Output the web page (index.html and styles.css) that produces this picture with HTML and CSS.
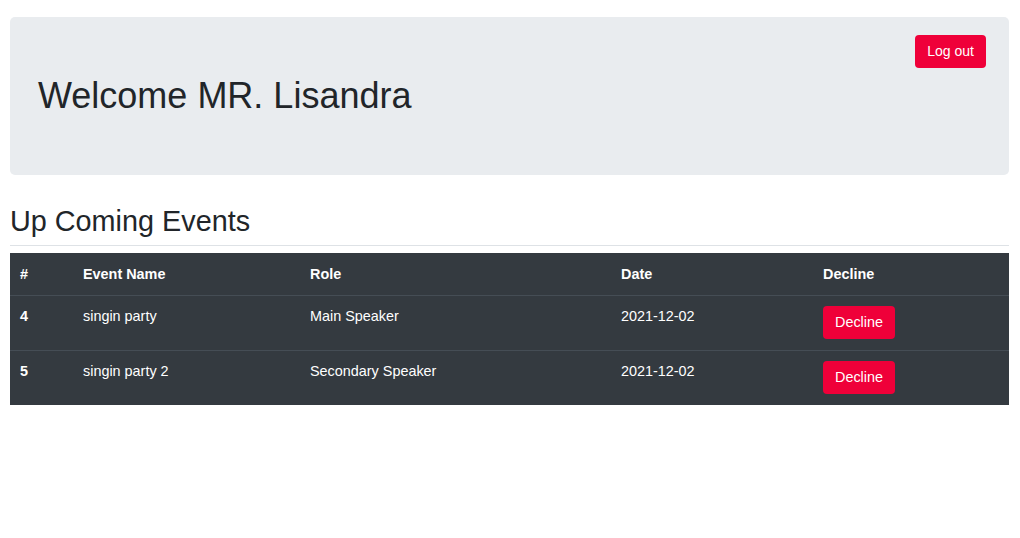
FILE: index.html
```html
<!DOCTYPE html>
<html lang="en">
<head>
<meta charset="utf-8">
<title>Welcome</title>
<link rel="stylesheet" href="styles.css">
</head>
<body>
<div class="page">
  <header class="jumbotron">
    <h1 class="welcome">Welcome MR. Lisandra</h1>
    <button class="btn btn-danger">Log out</button>
  </header>
  <h2 class="section-title">Up Coming Events</h2>
  <table class="events">
    <colgroup>
      <col class="c-num"><col class="c-name"><col class="c-role"><col class="c-date"><col class="c-decline">
    </colgroup>
    <thead>
      <tr><th>#</th><th>Event Name</th><th>Role</th><th>Date</th><th>Decline</th></tr>
    </thead>
    <tbody>
      <tr><th>4</th><td>singin party</td><td>Main Speaker</td><td>2021-12-02</td><td><button class="btn btn-danger btn-row">Decline</button></td></tr>
      <tr><th>5</th><td>singin party 2</td><td>Secondary Speaker</td><td>2021-12-02</td><td><button class="btn btn-danger btn-row">Decline</button></td></tr>
    </tbody>
  </table>
</div>
</body>
</html>
```

FILE: styles.css
```css
* { box-sizing: border-box; }
body {
  margin: 0;
  font-family: "Liberation Sans", Arial, sans-serif;
  color: #212529;
  background: #fff;
}
.page {
  padding: 17px 11px 0 10px;
}
.jumbotron {
  height: 158px;
  background: #e9ecef;
  border-radius: 5px;
  display: flex;
  justify-content: space-between;
  align-items: flex-start;
  padding: 18px 23px 0 28px;
}
.welcome {
  margin: 39px 0 0 0;
  font-size: 36px;
  font-weight: 400;
  line-height: 1.2;
}
.btn {
  font-family: inherit;
  font-size: 14px;
  line-height: 21px;
  padding: 6px 12px;
  border: 0;
  border-radius: 4px;
  cursor: pointer;
}
.btn-row {
  font-size: 14.4px;
}
.btn-danger {
  background: #ef0039;
  color: #fff;
}
.section-title {
  margin: 29px 0 0 0;
  font-size: 28.8px;
  font-weight: 400;
  line-height: 1.2;
  padding-bottom: 6px;
  border-bottom: 1px solid #dee2e6;
}
.events {
  margin-top: 7px;
  width: 999px;
  border-collapse: collapse;
  table-layout: fixed;
  background: #343a40;
  color: #fff;
  font-size: 14.4px;
}
.c-num { width: 63px; }
.c-name { width: 227px; }
.c-role { width: 311px; }
.c-date { width: 202px; }
.c-decline { width: 196px; }
.events th, .events td {
  text-align: left;
  vertical-align: top;
  line-height: 20px;
}
.events thead th {
  font-weight: 700;
  padding: 11px 10px;
}
.events tbody th, .events tbody td {
  padding: 10px 10px 11px 10px;
  border-top: 1px solid #454d55;
}
.events tbody th {
  font-weight: 700;
}
```
